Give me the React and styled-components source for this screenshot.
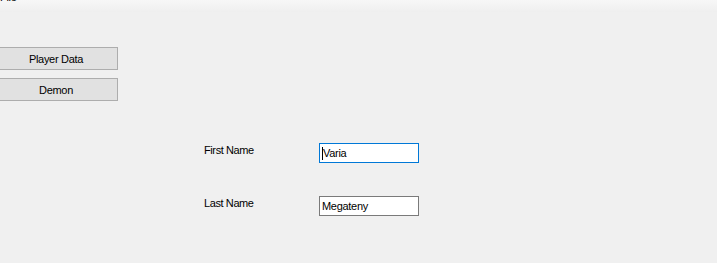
import styled, { createGlobalStyle } from "styled-components";

const Global = createGlobalStyle`
    html, body {
        margin: 0;
        padding: 0;
        background: #f0f0f0;
        font-family: "Liberation Sans", Arial, sans-serif;
        font-size: 11px;
        color: #000;
    }
`;

const Window = styled.div`
    width: 717px;
    height: 263px;
    overflow: hidden;
    background: #f0f0f0;
    display: flex;
    flex-direction: column;
`;

const MenuBar = styled.div`
    height: 12px;
    display: flex;
    background: linear-gradient(#f7f7f7, #efefef);
`;

const MenuItem = styled.div`
    margin-top: -8px;
    margin-left: -6px;
    padding: 0 6px;
    line-height: 11px;
    letter-spacing: -0.3px;
`;

const Body = styled.div`
    display: flex;
    align-items: flex-start;
`;

const Sidebar = styled.div`
    display: flex;
    flex-direction: column;
    gap: 8px;
    margin-top: 35px;
    margin-left: -6px;
`;

const NavButton = styled.div`
    width: 122px;
    height: 21px;
    border: 1px solid #adadad;
    background: #e1e1e1;
    display: flex;
    align-items: center;
    justify-content: center;
    letter-spacing: -0.3px;
`;

const Form = styled.div`
    display: grid;
    grid-template-columns: 115px 100px;
    row-gap: 33px;
    margin-top: 131px;
    margin-left: 86px;
`;

const Label = styled.div`
    padding-top: 1px;
    letter-spacing: -0.4px;
`;

const TextBox = styled.div`
    box-sizing: border-box;
    height: 20px;
    border: 1px solid ${p => (p.$focused ? "#0078d7" : "#7a7a7a")};
    background: #fff;
    display: flex;
    align-items: center;
    padding-left: 2px;
    letter-spacing: -0.3px;
`;

const Caret = styled.span`
    width: 1px;
    height: 13px;
    background: #000;
`;

export default function App() {
    return (
        <Window>
            <Global />
            <MenuBar>
                <MenuItem>File</MenuItem>
            </MenuBar>
            <Body>
                <Sidebar>
                    <NavButton>Player Data</NavButton>
                    <NavButton>Demon</NavButton>
                </Sidebar>
                <Form>
                    <Label>First Name</Label>
                    <TextBox $focused>
                        <Caret />
                        Varia
                    </TextBox>
                    <Label>Last Name</Label>
                    <TextBox>Megateny</TextBox>
                </Form>
            </Body>
        </Window>
    );
}
